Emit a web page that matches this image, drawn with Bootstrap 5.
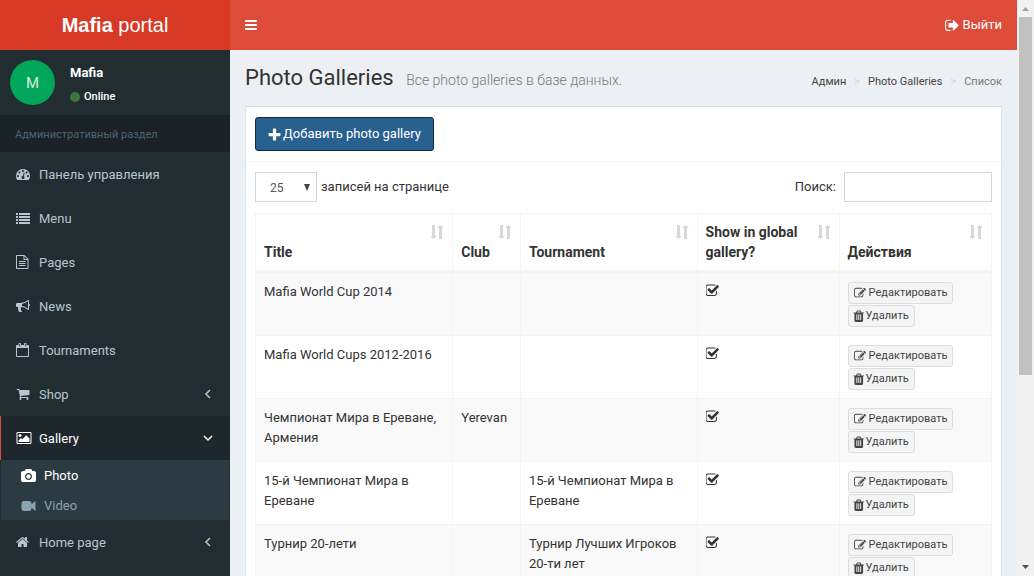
<!DOCTYPE html>
<html lang="ru">
<head>
<meta charset="utf-8">
<meta name="viewport" content="width=device-width, initial-scale=1">
<title>Mafia portal – Photo Galleries</title>
<link href="https://cdn.jsdelivr.net/npm/bootstrap@5.3.0/dist/css/bootstrap.min.css" rel="stylesheet">
<style>
body{font-family:Roboto,"Noto Sans",sans-serif;font-size:13px;line-height:20px;color:#333;background:#ecf0f5}
a{text-decoration:none}
.fa-ico{width:14px;height:14px;fill:currentColor;flex:none}
.fa-wide{width:16px}
/* sidebar */
.side{width:230px;background:#222d32;flex:none}
.brand{height:50px;background:#d73925;color:#fff;font:20px/50px "Liberation Sans",Arial,sans-serif}
.brand:hover{color:#fff}
.user-panel{height:65px;padding:10px}
.avatar{width:45px;height:45px;border-radius:50%;background:#00a65a;color:#d5f2e3;font-size:15px}
.user-info{font-size:11px;color:#fff;padding:3px 0 0 15px;gap:4px}
.user-info strong{font-size:13px;font-weight:700}
.user-info a{color:#fff;font-weight:500}
.dot{width:10px;height:10px;border-radius:50%;background:#3c763d}
.side-title{background:#1a2226;color:#4b646f;font-size:11px;line-height:17px;padding:11px 15px 9px}
.side-link{height:44px;padding:1px 15px 0 13px;border-left:3px solid transparent;color:#b8c7ce}
.side-link .fa-ico{margin:0 9px 2px 0}
.side-link .fa-wide{margin-right:7px}
.side-link:hover,.side-link.active{background:#1e282c;color:#fff}
.side-link.active{border-left:1px solid #dd4b39;padding-left:15px}
.side-link .chev{width:12px;height:12px;margin:0 1px 2px auto;fill:none;stroke:currentColor;stroke-width:1.5}
.sub-menu{background:#2c3b41;margin:0 1px}
.sub-link{height:30px;padding:1px 0 0 19px;color:#8aa4af}
.sub-link .fa-ico{margin-right:7px}
.sub-link .fa-wide{width:17px}
.sub-link.active{color:#fff}
/* top bar and heading */
.topbar{height:50px;background:#dd4b39;padding:0 15px 0 14px}
.topbar .fa-ico{display:block}
.topbar button,.topbar a{color:#fff}
.page-head{padding:14px 15px 12px}
.page-head h1{font-size:22px;line-height:28px;font-weight:400;margin:0}
.page-head small{font-size:14px;font-weight:300;color:#777;margin-left:7px}
.crumbs{font-size:11px;padding-top:6px;--bs-breadcrumb-divider:'>';--bs-breadcrumb-divider-color:#ccc;--bs-breadcrumb-item-padding-x:8px}
.crumbs a{color:#444}
.crumbs .active{color:#777}
/* box */
.panel-box{background:#fff;border:1px solid #d2d6de;border-color:#d2d6de #dfe3ea;margin:0 15px}
.box-top{padding:10px 9px;border-bottom:1px solid #f4f4f4}
.btn-add{font-size:13px;line-height:20px;padding:6px 12px;border:1px solid #122b40;border-radius:3px;background:#286090;color:#fff;gap:2px}
.btn-add:hover{background:#204d74;color:#fff}
.btn-add .fa-ico{width:13px;height:13px}
.box-main{padding:10px 9px}
.flat{height:30px;border:1px solid #d2d6de;border-radius:0;font-size:12px;color:#555;background:#fff}
select.flat{width:62px;padding:2px 14px 0;appearance:none;background:#fff url("data:image/svg+xml,%3Csvg xmlns='http://www.w3.org/2000/svg' viewBox='0 0 6 7'%3E%3Cpath fill='%23444' d='M0 0h6L3 7z'/%3E%3C/svg%3E") no-repeat right 6px center/6px 7px}
input.flat{width:148px;padding:5px 10px}
.galleries{--bs-table-striped-bg:#f9f9f9;--bs-table-color:#333;--bs-table-striped-color:#333;--bs-table-bg:#fff;border-color:#f4f4f4;table-layout:fixed;margin:11px 0 0}
.galleries>:not(caption)>*>*{padding:8px;color:#333}
.galleries th{font-size:14px;border-bottom-width:3px;vertical-align:bottom}
.galleries tbody td{height:63px;padding-top:9px}
.galleries tbody td.mark-cell{padding-top:7px}
.galleries tbody{border-top:0}
.sort{width:14px;height:16px;fill:#d8d8d8;flex:none;margin:2px 0 22px}
.btn-row{font-size:11px;line-height:16px;padding:2px 5px;border:1px solid #ddd;border-radius:3px;background:#f4f4f4;color:#444;display:flex;align-items:center;gap:3px;width:max-content}
.btn-row .fa-ico{width:12px;height:12px}
.btn-row+.btn-row{margin-top:1px;padding-left:4px;gap:1px}
/* scroll track */
.track{width:17px;background:#f1f1f1;flex:none}
.track svg{width:17px;height:17px;flex:none}
.track .thumb{background:#c1c1c1;width:13px;flex:0 0 66%}
</style>
</head>
<body>
<svg class="d-none" xmlns="http://www.w3.org/2000/svg">
<symbol id="bars" viewBox="0 0 1792 1792"><path d="M1664 1344v128q0 26-19 45t-45 19h-1408q-26 0-45-19t-19-45v-128q0-26 19-45t45-19h1408q26 0 45 19t19 45zm0-512v128q0 26-19 45t-45 19h-1408q-26 0-45-19t-19-45v-128q0-26 19-45t45-19h1408q26 0 45 19t19 45zm0-512v128q0 26-19 45t-45 19h-1408q-26 0-45-19t-19-45v-128q0-26 19-45t45-19h1408q26 0 45 19t19 45z"/></symbol>
<symbol id="signout" viewBox="64 64 1600 1600"><path d="M704 1440q0 4 1 20t.5 26.500-3 23.500-10 19.500-20.500 6.500h-320q-119 0-203.500-84.500t-84.500-203.500v-704q0-119 84.500-203.500t203.500-84.500h320q13 0 22.500 9.500t9.500 22.500q0 4 1 20t.5 26.500-3 23.500-10 19.500-20.500 6.500h-320q-66 0-113 47t-47 113v704q0 66 47 113t113 47h312l11.500 1 11.500 3 8 5.500 7 9 2 13.500zm928-544q0 26-19 45l-544 544q-19 19-45 19t-45-19-19-45v-288h-448q-26 0-45-19t-19-45v-384q0-26 19-45t45-19h448v-288q0-26 19-45t45-19 45 19l544 544q19 19 19 45z"/></symbol>
<symbol id="plus" viewBox="128 64 1536 1536"><path d="M1600 736v192q0 40-28 68t-68 28h-416v416q0 40-28 68t-68 28h-192q-40 0-68-28t-28-68v-416h-416q-40 0-68-28t-28-68v-192q0-40 28-68t68-28h416v-416q0-40 28-68t68-28h192q40 0 68 28t28 68v416h416q40 0 68 28t28 68z"/></symbol>
<symbol id="dash" viewBox="0 0 1792 1792"><path d="M384 1152q0-53-37.5-90.5t-90.5-37.5-90.5 37.5-37.5 90.5 37.5 90.5 90.5 37.5 90.5-37.5 37.5-90.5zm192-448q0-53-37.5-90.5t-90.5-37.5-90.5 37.5-37.5 90.5 37.5 90.5 90.5 37.5 90.5-37.5 37.5-90.5zm428 481l101-382q6-26-7.5-48.5t-38.5-29.5-48 6.5-30 39.5l-101 382q-60 5-107 43.5t-63 98.5q-20 77 20 146t117 89 146-20 89-117q16-60-6-117t-72-91zm660-33q0-53-37.5-90.5t-90.5-37.5-90.5 37.5-37.5 90.5 37.5 90.5 90.5 37.5 90.5-37.5 37.5-90.5zm-640-640q0-53-37.5-90.5t-90.5-37.5-90.5 37.5-37.5 90.5 37.5 90.5 90.5 37.5 90.5-37.5 37.5-90.5zm448 192q0-53-37.5-90.5t-90.5-37.5-90.5 37.5-37.5 90.5 37.5 90.5 90.5 37.5 90.5-37.5 37.5-90.5zm320 448q0 261-141 483-19 29-54 29h-1402q-35 0-54-29-141-221-141-483 0-182 71-348t191-286 286-191 348-71 348 71 286 191 191 286 71 348z"/></symbol>
<symbol id="list" viewBox="0 0 14 14"><path d="M0 2h2v2H0zM3 2h11v2H3zM0 5h2v2H0zM3 5h11v2H3zM0 8h2v2H0zM3 8h11v2H3zM0 11h2v2H0zM3 11h11v2H3z"/></symbol>
<symbol id="file" viewBox="0 0 14 14"><path fill-rule="evenodd" d="M.8 0H8.500L12.500 4v9.200q0 .8-.8.8H.8q-.8 0-.8-.8V.8Q0 0 .8 0zM1 1v12h10.500V5H8.200q-.7 0-.7-.8V1zM8.500 1.300V4h2.700zM3 6h6.500v1H3zM3 8h6.500v1H3zM3 10h6.500v1H3z"/></symbol>
<symbol id="horn" viewBox="0 0 1792 1792"><path d="M1664 640q53 0 90.500 37.500t37.500 90.500-37.500 90.500-90.500 37.500v384q0 52-38 90t-90 38q-417-347-812-380-58 19-91 66t-31 100.500 40 92.500q-20 33-23 65.500t6 58 33.500 55 48 50 61.500 50.500q-29 58-111.500 83t-168.500 11.500-132-55.500q-7-23-29.500-87.500t-32-94.500-23-89-15-101 3.500-98.500 22-110.500h-122q-66 0-113-47t-47-113v-192q0-66 47-113t113-47h480q435 0 896-384 52 0 90 38t38 90v384zm-128 604v-954q-394 302-768 343v270q377 42 768 341z"/></symbol>
<symbol id="cal" viewBox="0 0 14 14"><path fill-rule="evenodd" d="M1 2h1.500V1q0-1 1-1h.5q1 0 1 1v1h3V1q0-1 1-1h.5q1 0 1 1v1H12q1 0 1 1v10q0 1-1 1H1q-1 0-1-1V3q0-1 1-1zM1 5v8h11V5zM3.300 1v2.500h.8V1zM9.300 1v2.500h.8V1z"/></symbol>
<symbol id="cart" viewBox="0 0 1792 1792"><path d="M704 1536q0 52-38 90t-90 38-90-38-38-90 38-90 90-38 90 38 38 90zm896 0q0 52-38 90t-90 38-90-38-38-90 38-90 90-38 90 38 38 90zm128-1088v512q0 24-16.500 42.500t-40.500 21.500l-1044 122q13 60 13 70 0 16-24 64h920q26 0 45 19t19 45-19 45-45 19h-1024q-26 0-45-19t-19-45q0-11 8-31.500t16-36 21.500-40 15.500-29.500l-177-823h-204q-26 0-45-19t-19-45 19-45 45-19h256q16 0 28.500 6.500t19.500 15.500 13 24.500 8 26 5.500 29.500 4.500 26h1201q26 0 45 19t19 45z"/></symbol>
<symbol id="pic" viewBox="-64 0 1920 1792"><path d="M576 576q0 80-56 136t-136 56-136-56-56-136 56-136 136-56 136 56 56 136zm1024 384v448h-1408v-192l320-320 160 160 512-512zm96-704h-1600q-13 0-22.500 9.500t-9.500 22.500v1216q0 13 9.500 22.500t22.500 9.500h1600q13 0 22.500-9.500t9.500-22.500v-1216q0-13-9.500-22.500t-22.500-9.500zm160 32v1216q0 66-47 113t-113 47h-1600q-66 0-113-47t-47-113v-1216q0-66 47-113t113-47h1600q66 0 113 47t47 113z"/></symbol>
<symbol id="camera" viewBox="0 0 1920 1792"><path d="M960 672q119 0 203.500 84.500t84.500 203.500-84.500 203.500-203.500 84.500-203.500-84.500-84.500-203.500 84.500-203.500 203.500-84.500zm704-416q106 0 181 75t75 181v896q0 106-75 181t-181 75h-1408q-106 0-181-75t-75-181v-896q0-106 75-181t181-75h224l51-136q19-49 69.500-84.500t103.500-35.500h512q53 0 103.500 35.500t69.500 84.500l51 136h224zm-704 1152q185 0 316.500-131.500t131.500-316.500-131.500-316.500-316.500-131.500-316.500 131.500-131.500 316.500 131.500 316.500 316.500 131.500z"/></symbol>
<symbol id="video" viewBox="0 0 1792 1792"><path d="M1792 352v1088q0 42-39 59-13 5-25 5-27 0-45-19l-403-403v166q0 119-84.500 203.500t-203.500 84.500h-704q-119 0-203.500-84.500t-84.500-203.500v-704q0-119 84.500-203.500t203.500-84.500h704q119 0 203.500 84.500t84.500 203.500v165l403-402q18-19 45-19 12 0 25 5 39 17 39 59z"/></symbol>
<symbol id="home" viewBox="64 0 1792 1792"><path d="M1472 992v480q0 26-19 45t-45 19h-384v-384h-256v384h-384q-26 0-45-19t-19-45v-480q0-1 .5-3t.5-3l575-474 575 474q1 2 1 6zm223-69l-62 74q-8 9-21 11h-3q-13 0-21-7l-692-577-692 577q-12 8-24 7-13-2-21-11l-62-74q-8-10-7-23.500t11-21.500l719-599q32-26 76-26t76 26l244 204v-195q0-14 9-23t23-9h192q14 0 23 9t9 23v408l219 182q10 8 11 21.500t-7 23.500z"/></symbol>
<symbol id="check" viewBox="128 64 1728 1728"><path d="M1472 930v318q0 119-84.500 203.500t-203.500 84.500h-832q-119 0-203.500-84.500t-84.500-203.500v-832q0-119 84.500-203.500t203.500-84.500h832q63 0 117 25 15 7 18 23 3 17-9 29l-49 49q-10 10-23 10-3 0-9-2-23-6-45-6h-832q-66 0-113 47t-47 113v832q0 66 47 113t113 47h832q66 0 113-47t47-113v-254q0-13 9-22l64-64q10-10 23-10 6 0 12 3 20 8 20 29zm231-489l-814 814q-24 24-57 24t-57-24l-430-430q-24-24-24-57t24-57l110-110q24-24 57-24t57 24l263 263 647-647q24-24 57-24t57 24l110 110q24 24 24 57t-24 57z"/></symbol>
<symbol id="edit" viewBox="0 0 1792 1792"><path d="M888 1184l116-116-152-152-116 116v56h96v96h56zm440-720q-16-16-33 1l-350 350q-17 17-1 33t33-1l350-350q17-17 1-33zm80 594v190q0 119-84.500 203.500t-203.500 84.500h-832q-119 0-203.500-84.500t-84.500-203.500v-832q0-119 84.500-203.500t203.500-84.500h832q63 0 117 25 15 7 18 23 3 17-9 29l-49 49q-14 14-32 8-23-6-45-6h-832q-66 0-113 47t-47 113v832q0 66 47 113t113 47h832q66 0 113-47t47-113v-126q0-13 9-22l64-64q15-15 35-7t20 29zm-96-738l288 288-672 672h-288v-288zm444 132l-92 92-288-288 92-92q28-28 68-28t68 28l152 152q28 28 28 68t-28 68z"/></symbol>
<symbol id="trash" viewBox="128 64 1600 1600"><path d="M704 1376v-704q0-14-9-23t-23-9h-64q-14 0-23 9t-9 23v704q0 14 9 23t23 9h64q14 0 23-9t9-23zm256 0v-704q0-14-9-23t-23-9h-64q-14 0-23 9t-9 23v704q0 14 9 23t23 9h64q14 0 23-9t9-23zm256 0v-704q0-14-9-23t-23-9h-64q-14 0-23 9t-9 23v704q0 14 9 23t23 9h64q14 0 23-9t9-23zm-544-992h448l-48-117q-7-9-17-11h-317q-10 2-17 11zm928 32v64q0 14-9 23t-23 9h-96v948q0 83-47 143.500t-113 60.500h-832q-66 0-113-58.500t-47-141.500v-952h-96q-14 0-23-9t-9-23v-64q0-14 9-23t23-9h309l70-167q15-37 54-63t79-26h320q40 0 79 26t54 63l70 167h309q14 0 23 9t9 23z"/></symbol>
<symbol id="sort" viewBox="0 0 14 16"><path d="M2 1h3v11h2l-3.500 3L0 12h2zM9 15h3V4h2L10.500 1 7 4h2z"/></symbol>
<symbol id="left" viewBox="0 0 12 12"><path d="M8 2L4 6l4 4"/></symbol>
<symbol id="down" viewBox="0 0 12 12"><path d="M2 4l4 4 4-4"/></symbol>
</svg>

<div class="d-flex vh-100 overflow-hidden">
  <aside class="side">
    <a href="#" class="brand d-block text-center"><b>Mafia</b> portal</a>
    <div class="user-panel d-flex">
      <div class="avatar d-flex align-items-center justify-content-center">M</div>
      <div class="user-info d-flex flex-column">
        <strong>Mafia</strong>
        <a href="#" class="d-flex align-items-center gap-1"><span class="dot"></span>Online</a>
      </div>
    </div>
    <div class="side-title">Административный раздел</div>
    <nav>
      <a href="#" class="side-link d-flex align-items-center"><svg class="fa-ico"><use href="#dash"/></svg>Панель управления</a>
      <a href="#" class="side-link d-flex align-items-center"><svg class="fa-ico"><use href="#list"/></svg>Menu</a>
      <a href="#" class="side-link d-flex align-items-center"><svg class="fa-ico"><use href="#file"/></svg>Pages</a>
      <a href="#" class="side-link d-flex align-items-center"><svg class="fa-ico"><use href="#horn"/></svg>News</a>
      <a href="#" class="side-link d-flex align-items-center"><svg class="fa-ico"><use href="#cal"/></svg>Tournaments</a>
      <a href="#" class="side-link d-flex align-items-center"><svg class="fa-ico"><use href="#cart"/></svg>Shop<svg class="chev"><use href="#left"/></svg></a>
      <a href="#" class="side-link active d-flex align-items-center"><svg class="fa-ico fa-wide"><use href="#pic"/></svg>Gallery<svg class="chev"><use href="#down"/></svg></a>
      <div class="sub-menu">
        <a href="#" class="sub-link active d-flex align-items-center"><svg class="fa-ico fa-wide"><use href="#camera"/></svg>Photo</a>
        <a href="#" class="sub-link d-flex align-items-center"><svg class="fa-ico fa-wide"><use href="#video"/></svg>Video</a>
      </div>
      <a href="#" class="side-link d-flex align-items-center"><svg class="fa-ico"><use href="#home"/></svg>Home page<svg class="chev"><use href="#left"/></svg></a>
    </nav>
  </aside>

  <main class="flex-fill overflow-hidden">
    <header class="topbar d-flex align-items-center justify-content-between">
      <button type="button" class="btn p-0 border-0" aria-label="Toggle navigation"><svg class="fa-ico"><use href="#bars"/></svg></button>
      <a href="#" class="d-flex align-items-center gap-1"><svg class="fa-ico"><use href="#signout"/></svg>Выйти</a>
    </header>
    <div class="page-head d-flex align-items-center justify-content-between">
      <h1>Photo Galleries <small>Все photo galleries в базе данных.</small></h1>
      <nav aria-label="breadcrumb">
        <ol class="breadcrumb crumbs mb-0">
          <li class="breadcrumb-item"><a href="#">Админ</a></li>
          <li class="breadcrumb-item"><a href="#">Photo Galleries</a></li>
          <li class="breadcrumb-item active" aria-current="page">Список</li>
        </ol>
      </nav>
    </div>
    <section class="panel-box">
      <div class="box-top">
        <button type="button" class="btn btn-add d-flex align-items-center"><svg class="fa-ico"><use href="#plus"/></svg>Добавить photo gallery</button>
      </div>
      <div class="box-main">
        <div class="d-flex justify-content-between">
          <div class="d-flex align-items-center gap-1">
            <select class="flat" id="page-size"><option>10</option><option selected>25</option><option>50</option></select>
            <label for="page-size">записей на странице</label>
          </div>
          <div class="d-flex align-items-center gap-2">
            <label for="search">Поиск:</label>
            <input class="flat" type="search" id="search">
          </div>
        </div>
        <table class="table table-bordered table-striped galleries">
          <colgroup><col style="width:26.800%"><col style="width:9.200%"><col style="width:24%"><col style="width:19.300%"><col></colgroup>
          <thead>
            <tr>
              <th><div class="d-flex justify-content-between"><span class="align-self-end">Title</span><svg class="sort"><use href="#sort"/></svg></div></th>
              <th><div class="d-flex justify-content-between"><span class="align-self-end">Club</span><svg class="sort"><use href="#sort"/></svg></div></th>
              <th><div class="d-flex justify-content-between"><span class="align-self-end">Tournament</span><svg class="sort"><use href="#sort"/></svg></div></th>
              <th><div class="d-flex justify-content-between"><span class="align-self-end">Show in global gallery?</span><svg class="sort"><use href="#sort"/></svg></div></th>
              <th><div class="d-flex justify-content-between"><span class="align-self-end">Действия</span><svg class="sort"><use href="#sort"/></svg></div></th>
            </tr>
          </thead>
          <tbody id="rows"></tbody>
        </table>
      </div>
    </section>
  </main>

  <div class="track d-flex flex-column align-items-center" aria-hidden="true">
    <svg viewBox="0 0 17 17"><path fill="#a3a3a3" d="M5 11l3.500-4 3.500 4z"/></svg>
    <div class="flex-fill d-flex flex-column overflow-hidden"><div class="thumb"></div></div>
    <svg viewBox="0 0 17 17"><path fill="#505050" d="M5 6l3.500 4L12 6z"/></svg>
  </div>
</div>

<script src="https://cdn.jsdelivr.net/npm/bootstrap@5.3.0/dist/js/bootstrap.bundle.min.js"></script>
<script>
const galleries = [
  ['Mafia World Cup 2014', '', ''],
  ['Mafia World Cups 2012-2016', '', ''],
  ['Чемпионат Мира в Ереване, Армения', 'Yerevan', ''],
  ['15-й Чемпионат Мира в Ереване', '', '15-й Чемпионат Мира в Ереване'],
  ['Турнир 20-лети', '', 'Турнир Лучших Игроков 20-ти лет']
];
const icon = name => `<svg class="fa-ico"><use href="#${name}"/></svg>`;
document.getElementById('rows').innerHTML = galleries.map(([title, club, cup]) => `
  <tr><td>${title}</td><td>${club}</td><td>${cup}</td><td class="mark-cell">${icon('check')}</td>
  <td><button type="button" class="btn btn-row">${icon('edit')}Редактировать</button>
  <button type="button" class="btn btn-row">${icon('trash')}Удалить</button></td></tr>`).join('');
</script>
</body>
</html>
